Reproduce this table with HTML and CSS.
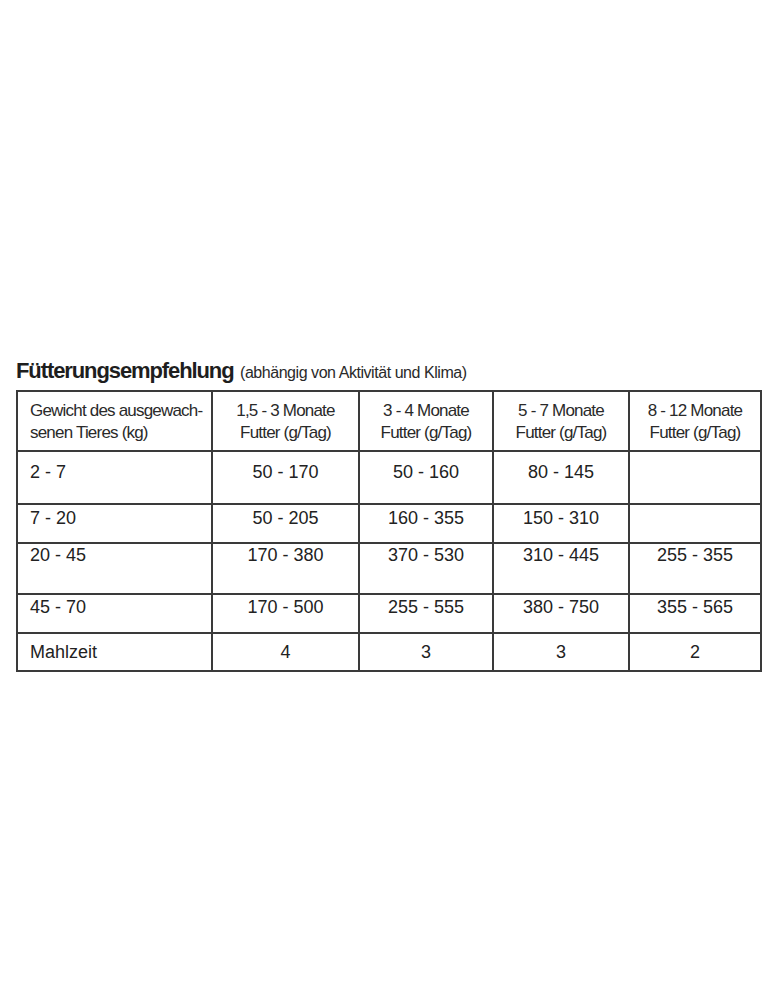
FILE: index.html
```html
<!DOCTYPE html>
<html lang="de">
<head>
<meta charset="utf-8">
<title>Fütterungsempfehlung</title>
<link rel="stylesheet" href="styles.css">
</head>
<body>
<div class="page">
  <h1 class="title"><span class="title-main">Fütterungsempfehlung</span> <span class="title-sub">(abhängig von Aktivität und Klima)</span></h1>
  <div class="grid">
    <div class="cell head left">Gewicht des ausgewach-<br>senen Tieres (kg)</div>
    <div class="cell head">1,5 - 3 Monate<br>Futter (g/Tag)</div>
    <div class="cell head">3 - 4 Monate<br>Futter (g/Tag)</div>
    <div class="cell head">5 - 7 Monate<br>Futter (g/Tag)</div>
    <div class="cell head">8 - 12 Monate<br>Futter (g/Tag)</div>

    <div class="cell r1 left">2 - 7</div>
    <div class="cell r1">50 - 170</div>
    <div class="cell r1">50 - 160</div>
    <div class="cell r1">80 - 145</div>
    <div class="cell r1"></div>

    <div class="cell r2 left">7 - 20</div>
    <div class="cell r2">50 - 205</div>
    <div class="cell r2">160 - 355</div>
    <div class="cell r2">150 - 310</div>
    <div class="cell r2"></div>

    <div class="cell r3 left">20 - 45</div>
    <div class="cell r3">170 - 380</div>
    <div class="cell r3">370 - 530</div>
    <div class="cell r3">310 - 445</div>
    <div class="cell r3">255 - 355</div>

    <div class="cell r4 left">45 - 70</div>
    <div class="cell r4">170 - 500</div>
    <div class="cell r4">255 - 555</div>
    <div class="cell r4">380 - 750</div>
    <div class="cell r4">355 - 565</div>

    <div class="cell r5 left">Mahlzeit</div>
    <div class="cell r5">4</div>
    <div class="cell r5">3</div>
    <div class="cell r5">3</div>
    <div class="cell r5">2</div>
  </div>
</div>
</body>
</html>
```

FILE: styles.css
```css
html, body {
  margin: 0;
  padding: 0;
  background: #ffffff;
}

.page {
  padding: 358px 0 0 16px;
  color: #222222;
  font-family: "Liberation Sans", Arial, sans-serif;
}

.title {
  margin: 0 0 6px 0;
  height: 26px;
  font-size: 16px;
  line-height: 26px;
  font-weight: normal;
  white-space: nowrap;
  word-spacing: 2px;
}

.title-main {
  font-family: "Liberation Sans", Arial, sans-serif;
  font-weight: bold;
  font-size: 22px;
  letter-spacing: -1.1px;
  word-spacing: 0;
  color: #1e1e1e;
}

.title-sub {
  font-family: "Liberation Sans", Arial, sans-serif;
  font-size: 16px;
  letter-spacing: -0.45px;
  word-spacing: 0;
  color: #2a2a2a;
}

.grid {
  display: grid;
  grid-template-columns: 195px 147px 134px 136px 132px;
  grid-template-rows: 60px 53px 39px 51px 39px 38px;
  width: max-content;
  border-top: 2px solid #3a3a3a;
  border-left: 2px solid #3a3a3a;
}

.cell {
  box-sizing: border-box;
  border-right: 2px solid #3a3a3a;
  border-bottom: 2px solid #3a3a3a;
  text-align: center;
  font-size: 18px;
  line-height: 22px;
  color: #222222;
  white-space: nowrap;
}

.cell.left {
  text-align: left;
  padding-left: 12px;
}

.head {
  padding-top: 8px;
  font-size: 17px;
  letter-spacing: -0.8px;
  line-height: 22px;
  color: #2a2a2a;
}

.r1 { padding-top: 9px; }
.r2 { padding-top: 2px; }
.r3 { padding-top: 0px; }
.r4 { padding-top: 1px; }
.r5 { padding-top: 7px; }
```
